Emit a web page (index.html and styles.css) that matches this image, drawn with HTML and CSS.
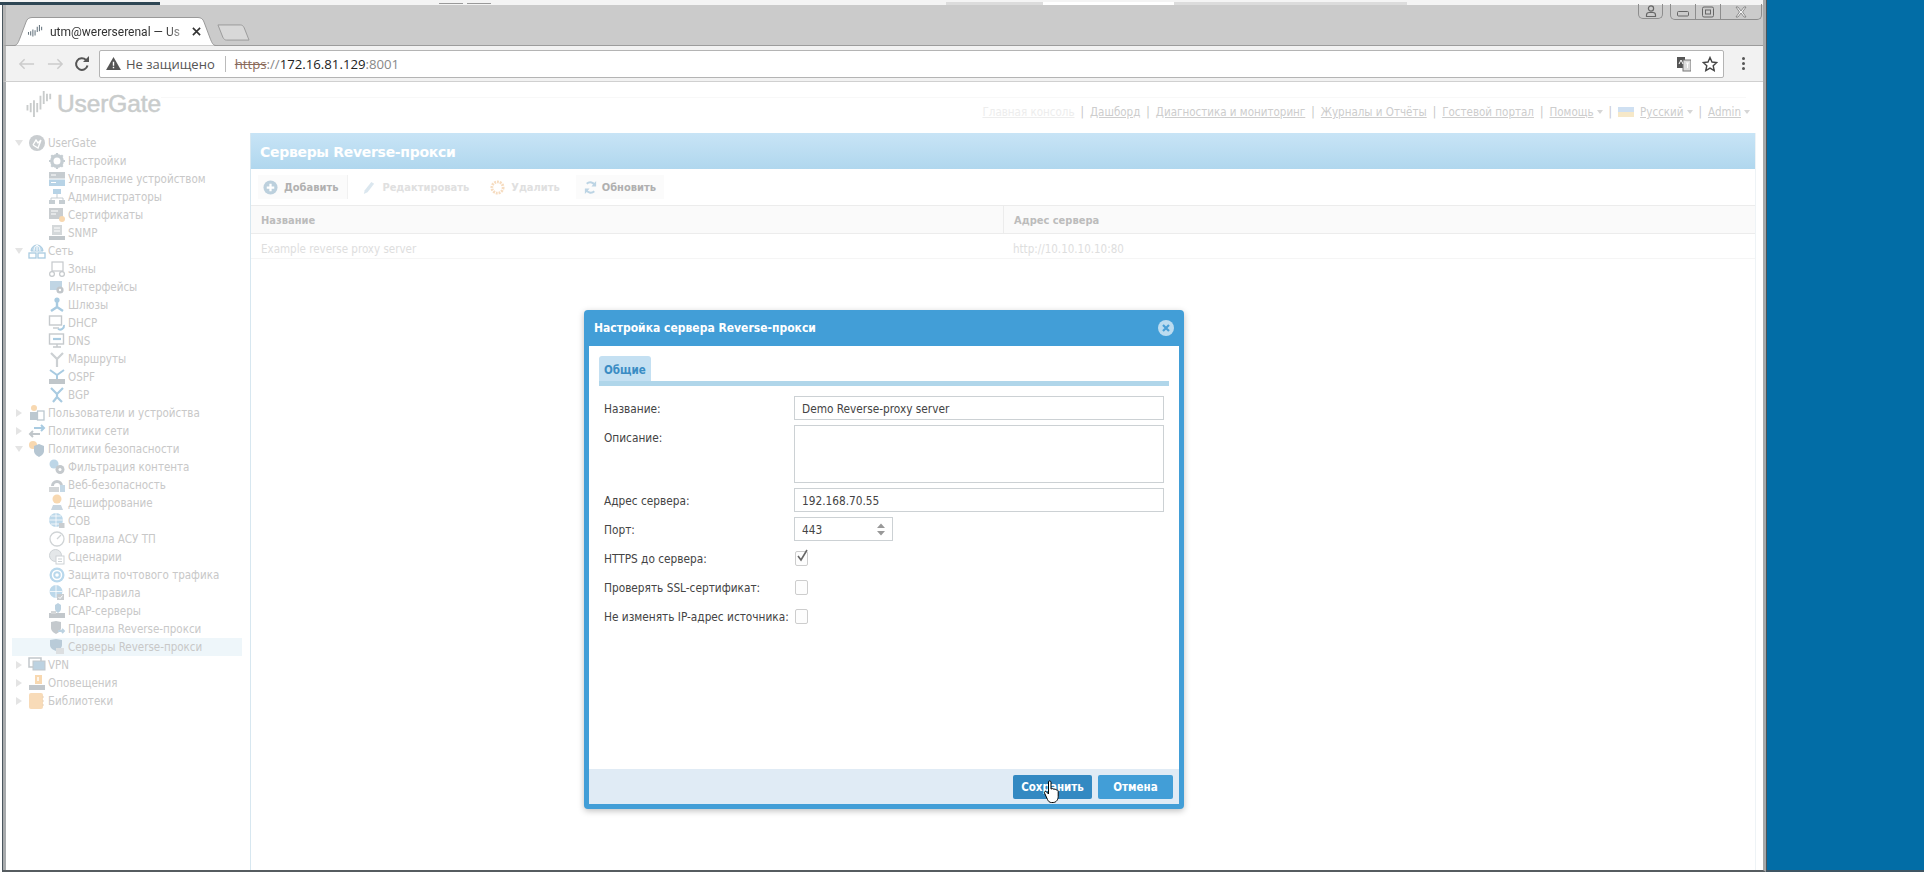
FILE: index.html
```html
<!DOCTYPE html>
<html lang="ru">
<head>
<meta charset="utf-8">
<title>UserGate</title>
<link rel="stylesheet" href="styles.css">
</head>
<body>
<svg class="defs" width="0" height="0" aria-hidden="true">
<defs>
<symbol id="i-ug" viewBox="0 0 18 18"><circle cx="9" cy="9" r="8" fill="#c9cdd0"/><path d="M5 11l3-5 2 3 3-3M5 11l5 3 3-8" fill="none" stroke="#fff" stroke-width="1.4"/></symbol>
<symbol id="i-gear" viewBox="0 0 18 18"><circle cx="9" cy="9" r="5.2" fill="none" stroke="#c5cdd2" stroke-width="3.4"/><path d="M9 1v3M9 14v3M1 9h3M14 9h3M3.3 3.3l2 2M12.7 12.7l2 2M14.7 3.3l-2 2M5.3 12.7l-2 2" stroke="#c5cdd2" stroke-width="2.2"/></symbol>
<symbol id="i-server" viewBox="0 0 18 18"><rect x="1" y="2" width="16" height="6.5" fill="#c6ccd0"/><rect x="1" y="9.5" width="16" height="6.5" fill="#b7d3e6"/><path d="M3 5h5M3 12.5h5" stroke="#fff"/></symbol>
<symbol id="i-admins" viewBox="0 0 18 18"><rect x="5" y="1" width="8" height="5" fill="#b7d3e6"/><path d="M9 6v4M3 13v-3h12v3" fill="none" stroke="#c5cdd2"/><rect x="1" y="12" width="6" height="4" fill="#c5cdd2"/><rect x="11" y="12" width="6" height="4" fill="#c5cdd2"/></symbol>
<symbol id="i-cert" viewBox="0 0 18 18"><rect x="1" y="2" width="14" height="11" fill="#c9cdd0"/><path d="M3 5h7M3 8h5" stroke="#fff"/><circle cx="14" cy="13" r="3" fill="#f8d8b0"/></symbol>
<symbol id="i-snmp" viewBox="0 0 18 18"><rect x="4" y="1" width="10" height="10" fill="#d4d8da"/><path d="M6 4h6M6 7h6" stroke="#fff"/><rect x="1" y="12" width="16" height="4" fill="#c0c6ca"/></symbol>
<symbol id="i-net" viewBox="0 0 18 18"><path d="M3 9a6 6 0 0 1 12 0z" fill="#bcd8ea" stroke="#a9cbe1"/><path d="M9 3v6M6 9c0-3 1-5 3-6M12 9c0-3-1-5-3-6" fill="none" stroke="#fff"/><rect x="1" y="11" width="7" height="5" fill="none" stroke="#a9cbe1" stroke-width="1.3"/><rect x="10" y="11" width="7" height="5" fill="none" stroke="#a9cbe1" stroke-width="1.3"/></symbol>
<symbol id="i-zone" viewBox="0 0 18 18"><rect x="4" y="2" width="11" height="9" fill="none" stroke="#c5c9cc" stroke-width="1.2"/><circle cx="4" cy="14" r="2.4" fill="none" stroke="#c5c9cc" stroke-width="1.2"/><circle cx="14" cy="14" r="2.4" fill="none" stroke="#c5c9cc" stroke-width="1.2"/></symbol>
<symbol id="i-iface" viewBox="0 0 18 18"><rect x="2" y="3" width="12" height="9" fill="#c0d5e4"/><circle cx="12" cy="12" r="3.6" fill="#c1c6ca"/><circle cx="12" cy="12" r="1.2" fill="#fff"/></symbol>
<symbol id="i-gate" viewBox="0 0 18 18"><circle cx="9" cy="4" r="2.6" fill="#a9cbe1"/><path d="M9 6v5L3 15M9 11l6 4" fill="none" stroke="#a9cbe1" stroke-width="2.4"/></symbol>
<symbol id="i-dhcp" viewBox="0 0 18 18"><rect x="1.5" y="2" width="12" height="9" fill="none" stroke="#c5c9cc" stroke-width="1.4"/><path d="M5 14h6" stroke="#c5c9cc" stroke-width="1.4"/><path d="M10 15a4 4 0 0 0 6-4" fill="none" stroke="#a9cbe1" stroke-width="2"/></symbol>
<symbol id="i-dns" viewBox="0 0 18 18"><rect x="1.5" y="2" width="14" height="10" fill="none" stroke="#c5c9cc" stroke-width="1.4"/><path d="M5 15h8M9 12v3" stroke="#c5c9cc" stroke-width="1.4"/><path d="M5 7h8" stroke="#a9cbe1" stroke-width="2.2"/></symbol>
<symbol id="i-route" viewBox="0 0 18 18"><path d="M9 17V9L3 3M9 9l6-6" fill="none" stroke="#ccd0d3" stroke-width="2.2"/></symbol>
<symbol id="i-ospf" viewBox="0 0 18 18"><path d="M2 2l7 5 7-5M9 7v4" fill="none" stroke="#a9cbe1" stroke-width="2"/><rect x="1" y="11" width="16" height="5" fill="#c0c6ca"/></symbol>
<symbol id="i-bgp" viewBox="0 0 18 18"><path d="M3 2l6 6 6-6M9 8v3l-4 5M9 11l5 5" fill="none" stroke="#a9cbe1" stroke-width="2.2"/></symbol>
<symbol id="i-users" viewBox="0 0 18 18"><circle cx="6" cy="4" r="3" fill="#f8d8b0"/><rect x="2" y="8" width="8" height="8" fill="#bcc8d0"/><rect x="9.5" y="7" width="6.5" height="9" fill="none" stroke="#bcc8d0" stroke-width="1.3"/></symbol>
<symbol id="i-pol" viewBox="0 0 18 18"><path d="M6 6h10M13 3l3 3-3 3" fill="none" stroke="#a9cbe1" stroke-width="2"/><path d="M12 12H2M5 9l-3 3 3 3" fill="none" stroke="#c0c6ca" stroke-width="2"/></symbol>
<symbol id="i-shield" viewBox="0 0 18 18"><circle cx="5" cy="5" r="4" fill="#f8d8b0"/><path d="M6 6l5-2 5 2v5c0 3-3 5-5 6-2-1-5-3-5-6z" fill="#b6c6d2"/></symbol>
<symbol id="i-filter" viewBox="0 0 18 18"><circle cx="6" cy="6" r="4.5" fill="#bdd6e7"/><circle cx="12" cy="11.500" r="4.500" fill="#c4c9cd"/><circle cx="12" cy="11.500" r="1.500" fill="#fff"/></symbol>
<symbol id="i-web" viewBox="0 0 18 18"><path d="M3 10a6 6 0 0 1 12 0h-3a3 3 0 0 0-6 0z" fill="#c4c9cd"/><rect x="1" y="11" width="10" height="5" fill="#d3d6d8"/><rect x="12" y="9" width="5" height="7" fill="#c4d8e6"/></symbol>
<symbol id="i-dec" viewBox="0 0 18 18"><circle cx="9" cy="5" r="4.500" fill="#f8d8b0"/><path d="M3 16l2-5h8l2 5z" fill="#c9d6e0"/></symbol>
<symbol id="i-ids" viewBox="0 0 18 18"><circle cx="8" cy="8" r="7" fill="#bcd8ea"/><path d="M1 8h14M8 1v14M3 4h10M3 12h10" stroke="#fff" stroke-width=".8"/><rect x="11" y="11" width="5.500" height="5" fill="#c9cdd0"/></symbol>
<symbol id="i-scada" viewBox="0 0 18 18"><circle cx="9" cy="9" r="7" fill="none" stroke="#d0d4d6" stroke-width="1.300"/><path d="M9 9l4-4" stroke="#d0d4d6" stroke-width="1.300"/></symbol>
<symbol id="i-scen" viewBox="0 0 18 18"><circle cx="7.500" cy="7.500" r="6" fill="#e4e7e9" stroke="#cdd2d5"/><rect x="8" y="8" width="8" height="8" fill="#fff" stroke="#cdd2d5"/><path d="M10 11h4M10 13.500h4" stroke="#cdd2d5"/></symbol>
<symbol id="i-mail" viewBox="0 0 18 18"><circle cx="9" cy="9" r="7.500" fill="#b9d8ec"/><circle cx="9" cy="9" r="4.500" fill="none" stroke="#fff" stroke-width="1.500"/><circle cx="9" cy="9" r="1.800" fill="#fff"/></symbol>
<symbol id="i-irule" viewBox="0 0 18 18"><circle cx="8" cy="7.500" r="6.500" fill="#bcd8ea"/><path d="M1.500 7.500h13M8 1v13" stroke="#fff" stroke-width=".8"/><rect x="9" y="10" width="7" height="6" fill="#c9cdd0"/><path d="M10.500 13l1.500 1.500 2.500-3" stroke="#fff" fill="none"/></symbol>
<symbol id="i-isrv" viewBox="0 0 18 18"><path d="M7 3l3-2 3 2v4c0 2-2 3-3 4-1-1-3-2-3-4z" fill="#bcd2e1"/><rect x="1" y="11" width="16" height="5" fill="#c2c7cb"/><rect x="3" y="9" width="5" height="3" fill="#d3d6d8"/></symbol>
<symbol id="i-rrule" viewBox="0 0 18 18"><path d="M3 2l5-1 5 1v6c0 3-3 5-5 6-2-1-5-3-5-6z" fill="#c4c9cd"/><path d="M10 11h6M14 9l2 2-2 2" fill="none" stroke="#bcd2e1" stroke-width="1.800"/></symbol>
<symbol id="i-rsrv" viewBox="0 0 18 18"><path d="M2 2l6-1 6 1v5c0 3-3 5-6 6-3-1-6-3-6-6z" fill="#b9cbd8"/><rect x="8" y="10" width="8" height="6" fill="#dcdfe1"/></symbol>
<symbol id="i-vpn" viewBox="0 0 18 18"><rect x="1" y="2" width="12" height="9" fill="none" stroke="#c2c7cb" stroke-width="1.500"/><rect x="5" y="5" width="12" height="9" fill="#bcd2e1" stroke="#c2c7cb"/></symbol>
<symbol id="i-alert" viewBox="0 0 18 18"><rect x="7" y="1" width="7" height="9" fill="#f8d8b0"/><rect x="1" y="11" width="16" height="5" fill="#c2c7cb"/><path d="M10 3v4" stroke="#fff" stroke-width="1.500"/></symbol>
<symbol id="i-lib" viewBox="0 0 18 18"><rect x="1" y="1" width="14" height="16" rx="2" fill="#f8dbb8"/><path d="M15 4v2M15 8v2M15 12v2" stroke="#e6d2bb"/></symbol>
</defs>
</svg>

<div class="screen">
  <div class="window">
    <div class="topstrip">
      <span class="strip-dark"></span>
      <span class="strip-tick t1"></span>
      <span class="strip-tick t2"></span>
      <span class="strip-seg s1"></span>
      <span class="strip-white"></span>
      <span class="strip-seg s2"></span>
    </div>
    <div class="tabstrip">
      <div class="tab">
        <svg class="tab-shape" viewBox="0 0 206 29" preserveAspectRatio="none"><path d="M0 28.500H2C5 28.500 6 26 8 21L14 5C15 2 17 .5 20 .5H186C189 .5 191 2 192 5L198 21C200 26 201 28.500 204 28.500H206" fill="#fff" stroke="#9a9a9a"/></svg>
        <svg class="tab-logo" viewBox="0 0 18 16"><path d="M1 8v3M3.500 7v5M6 5v8M8.500 6v6M11 2v6M13.500 0v7M16 2v4" stroke="#66757f" stroke-width="1.200"/></svg>
        <span class="tab-title">utm@wererserenal — Us</span>
        <svg class="tab-close" viewBox="0 0 10 10"><path d="M1 1l8 8M9 1l-8 8" stroke="#333" stroke-width="1.800"/></svg>
      </div>
      <svg class="newtab" viewBox="0 0 34 18" preserveAspectRatio="none"><path d="M1 1H24C26 1 27 2 28 4L33 17H10C8 17 7 16 6 14z" fill="#d8d8d8" stroke="#9a9a9a"/></svg>
      <div class="wincontrols">
        <div class="winbtn user"><svg viewBox="0 0 12 12" width="12" height="12"><circle cx="6" cy="3.500" r="2.600" fill="none" stroke="#666" stroke-width="1.200"/><path d="M1.500 11.500v-1.500c0-1.500 1-2.500 2.500-2.500h4c1.500 0 2.500 1 2.500 2.500v1.500z" fill="none" stroke="#666" stroke-width="1.200"/></svg></div>
        <div class="wingroup">
          <div class="winbtn"><svg class="ic-min" viewBox="0 0 12 6" width="12" height="6"><rect x=".5" y=".5" width="11" height="4.500" rx="1" fill="none" stroke="#666"/></svg></div>
          <div class="winbtn"><svg viewBox="0 0 12 12" width="12" height="12"><rect x=".5" y="1" width="11" height="10" rx="1.500" fill="none" stroke="#666"/><rect x="3.500" y="4" width="5" height="4" fill="none" stroke="#666"/></svg></div>
          <div class="winbtn wide"><svg viewBox="0 0 14 12" width="14" height="12"><path d="M2 1h2l3 4 3-4h2L8.500 6 12 11h-2L7 7l-3 4H2l3.500-5z" fill="#f4f4f4" stroke="#777" stroke-width=".8"/></svg></div>
        </div>
      </div>
    </div>
    <div class="toolbar">
      <svg class="nav-ic" viewBox="0 0 18 14"><path d="M17 7H2M7 2L2 7l5 5" fill="none" stroke="#ccc" stroke-width="1.600"/></svg>
      <svg class="nav-ic" viewBox="0 0 18 14"><path d="M1 7h15M11 2l5 5-5 5" fill="none" stroke="#ccc" stroke-width="1.600"/></svg>
      <svg class="nav-reload" viewBox="0 0 16 16"><path d="M13.500 9.500A5.800 5.800 0 1 1 12 4" fill="none" stroke="#555" stroke-width="2"/><path d="M9 6h6V0z" fill="#555"/></svg>
      <div class="omnibox">
        <svg class="warn" viewBox="0 0 16 14"><path d="M8 0l8 14H0z" fill="#555"/><path d="M8 5v4.500M8 10.500v1.500" stroke="#fff" stroke-width="1.500"/></svg>
        <span class="insecure">Не защищено</span>
        <span class="omni-sep"></span>
        <span class="url"><s class="url-s">https</s><span class="url-g">://</span>172.16.81.129<span class="url-g">:8001</span></span>
        <span class="omni-right">
          <svg class="translate" viewBox="0 0 14 16"><rect x="0" y="1" width="8" height="11" fill="#555"/><rect x="6" y="4" width="8" height="11" fill="#ddd" stroke="#777"/><path d="M2 8l2-4 2 4M9 7h3M10.500 7v5" stroke="#fff" fill="none"/></svg>
          <svg class="star" viewBox="0 0 16 16"><path d="M8 1.500l2 4.500 4.800.500-3.600 3.200 1 4.800L8 12.100 3.800 14.500l1-4.800L1.200 6.500 6 6z" fill="none" stroke="#444" stroke-width="1.400"/></svg>
        </span>
      </div>
      <div class="kebab"><i></i><i></i><i></i></div>
    </div>
    <div class="page">
      <header class="pagehead">
        <div class="logo">
          <svg class="logo-mark" viewBox="0 0 30 28"><path d="M1.500 15v6M5 13v10M8.500 10v18M12 13v10M15.500 5v15M19 0v14M22.500 3v8M26 3v6" stroke="#c9cccc" stroke-width="2" fill="none"/></svg>
          <span class="logo-text">UserGate</span>
        </div>
        <nav class="topnav">
          <a class="nl nl-faint">Главная консоль</a><span class="bar">|</span>
          <a class="nl">Дашборд</a><span class="bar">|</span>
          <a class="nl">Диагностика и мониторинг</a><span class="bar">|</span>
          <a class="nl">Журналы и Отчёты</a><span class="bar">|</span>
          <a class="nl">Гостевой портал</a><span class="bar">|</span>
          <a class="nl">Помощь</a><span class="caret"></span><span class="bar">|</span>
          <span class="flag"></span><a class="nl">Русский</a><span class="caret"></span><span class="bar">|</span>
          <a class="nl">Admin</a><span class="caret"></span>
        </nav>
      </header>
      <div class="workspace">
        <aside class="tree">
          <div class="row"><span class="arrow open"></span><svg class="ti"><use href="#i-ug"/></svg><span>UserGate</span></div>
          <div class="row child"><svg class="ti"><use href="#i-gear"/></svg><span>Настройки</span></div>
          <div class="row child"><svg class="ti"><use href="#i-server"/></svg><span>Управление устройством</span></div>
          <div class="row child"><svg class="ti"><use href="#i-admins"/></svg><span>Администраторы</span></div>
          <div class="row child"><svg class="ti"><use href="#i-cert"/></svg><span>Сертификаты</span></div>
          <div class="row child"><svg class="ti"><use href="#i-snmp"/></svg><span>SNMP</span></div>
          <div class="row"><span class="arrow open"></span><svg class="ti"><use href="#i-net"/></svg><span>Сеть</span></div>
          <div class="row child"><svg class="ti"><use href="#i-zone"/></svg><span>Зоны</span></div>
          <div class="row child"><svg class="ti"><use href="#i-iface"/></svg><span>Интерфейсы</span></div>
          <div class="row child"><svg class="ti"><use href="#i-gate"/></svg><span>Шлюзы</span></div>
          <div class="row child"><svg class="ti"><use href="#i-dhcp"/></svg><span>DHCP</span></div>
          <div class="row child"><svg class="ti"><use href="#i-dns"/></svg><span>DNS</span></div>
          <div class="row child"><svg class="ti"><use href="#i-route"/></svg><span>Маршруты</span></div>
          <div class="row child"><svg class="ti"><use href="#i-ospf"/></svg><span>OSPF</span></div>
          <div class="row child"><svg class="ti"><use href="#i-bgp"/></svg><span>BGP</span></div>
          <div class="row"><span class="arrow"></span><svg class="ti"><use href="#i-users"/></svg><span>Пользователи и устройства</span></div>
          <div class="row"><span class="arrow"></span><svg class="ti"><use href="#i-pol"/></svg><span>Политики сети</span></div>
          <div class="row"><span class="arrow open"></span><svg class="ti"><use href="#i-shield"/></svg><span>Политики безопасности</span></div>
          <div class="row child"><svg class="ti"><use href="#i-filter"/></svg><span>Фильтрация контента</span></div>
          <div class="row child"><svg class="ti"><use href="#i-web"/></svg><span>Веб-безопасность</span></div>
          <div class="row child"><svg class="ti"><use href="#i-dec"/></svg><span>Дешифрование</span></div>
          <div class="row child"><svg class="ti"><use href="#i-ids"/></svg><span>СОВ</span></div>
          <div class="row child"><svg class="ti"><use href="#i-scada"/></svg><span>Правила АСУ ТП</span></div>
          <div class="row child"><svg class="ti"><use href="#i-scen"/></svg><span>Сценарии</span></div>
          <div class="row child"><svg class="ti"><use href="#i-mail"/></svg><span>Защита почтового трафика</span></div>
          <div class="row child"><svg class="ti"><use href="#i-irule"/></svg><span>ICAP-правила</span></div>
          <div class="row child"><svg class="ti"><use href="#i-isrv"/></svg><span>ICAP-серверы</span></div>
          <div class="row child"><svg class="ti"><use href="#i-rrule"/></svg><span>Правила Reverse-прокси</span></div>
          <div class="row child selected"><svg class="ti"><use href="#i-rsrv"/></svg><span>Серверы Reverse-прокси</span></div>
          <div class="row"><span class="arrow"></span><svg class="ti"><use href="#i-vpn"/></svg><span>VPN</span></div>
          <div class="row"><span class="arrow"></span><svg class="ti"><use href="#i-alert"/></svg><span>Оповещения</span></div>
          <div class="row"><span class="arrow"></span><svg class="ti"><use href="#i-lib"/></svg><span>Библиотеки</span></div>
        </aside>
        <main class="main">
          <h1 class="panel-title">Серверы Reverse-прокси</h1>
          <div class="actions">
            <button class="act act-add"><svg class="act-ic" viewBox="0 0 16 16"><circle cx="8" cy="8" r="7.500" fill="#bcd0dd"/><path d="M8 4v8M4 8h8" stroke="#fff" stroke-width="2.400"/></svg>Добавить</button>
            <button class="act off act-edit"><svg class="act-ic" viewBox="0 0 16 16"><path d="M3 15l1-4 7-9 3 2-7 9z" fill="#dbe7ef"/></svg>Редактировать</button>
            <button class="act off act-del"><svg class="act-ic" viewBox="0 0 16 16"><circle cx="8" cy="8" r="6" fill="none" stroke="#f6dcc0" stroke-width="3" stroke-dasharray="2 1"/></svg>Удалить</button>
            <button class="act act-ref"><svg class="act-ic" viewBox="0 0 16 16"><path d="M13 6a5.500 5.500 0 0 0-9-2M3 10a5.500 5.500 0 0 0 9 2" fill="none" stroke="#bcd4e4" stroke-width="2.200"/><path d="M14 1v6H9zM2 15V9h5z" fill="#bcd4e4"/></svg>Обновить</button>
          </div>
          <div class="grid">
            <div class="cell head">Название</div>
            <div class="cell head">Адрес сервера</div>
            <div class="cell body">Example reverse proxy server</div>
            <div class="cell body">http://10.10.10.10:80</div>
          </div>
        </main>
      </div>
    </div>
    <section class="modal">
      <div class="modal-head">
        <span>Настройка сервера Reverse-прокси</span>
        <svg class="modal-x" viewBox="0 0 16 16"><circle cx="8" cy="8" r="8" fill="#bcdcf0"/><path d="M5 5l6 6M11 5l-6 6" stroke="#4a9fd6" stroke-width="2.200"/></svg>
      </div>
      <div class="modal-body">
        <div class="tabs"><span class="mtab">Общие</span></div>
        <form class="form">
          <label class="lbl">Название:</label><div class="input">Demo Reverse-proxy server</div>
          <label class="lbl">Описание:</label><div class="input area"></div>
          <label class="lbl">Адрес сервера:</label><div class="input">192.168.70.55</div>
          <label class="lbl">Порт:</label>
          <div class="input port">443
            <svg class="spin" viewBox="0 0 10 12"><path d="M5 0l4 4.500H1zM5 12L1 7.500h8z" fill="#999"/></svg>
          </div>
          <label class="lbl">HTTPS до сервера:</label><div class="chk-cell"><span class="chk"><svg class="tick" viewBox="0 0 14 14"><path d="M3 7l3 4 6-10" fill="none" stroke="#666" stroke-width="1.600"/></svg></span></div>
          <label class="lbl">Проверять SSL-сертификат:</label><div class="chk-cell"><span class="chk"></span></div>
          <label class="lbl">Не изменять IP-адрес источника:</label><div class="chk-cell"><span class="chk"></span></div>
        </form>
        <div class="modal-foot">
          <button class="btn btn-dark">Сохранить</button>
          <button class="btn">Отмена</button>
        </div>
      </div>
      <svg class="cursor" viewBox="0 0 16 24"><path d="M5 1.500c1-1 2.500-.5 2.500 1V9l1-.3c1-.3 1.500 0 1.800.7l.7-.2c1-.2 1.500.2 1.700.8 1-.2 2 .2 2 1.500v5c0 3-2 6-5 6H8c-2 0-3-1-4-3L1 13c-.5-1 .5-2 1.500-1.500L5 14z" fill="#fff" stroke="#000" stroke-width="1"/></svg>
    </section>
  </div>
  <div class="desktop"></div>
</div>
</body>
</html>
```
FILE: styles.css
```css
* { box-sizing: border-box; }
html, body { margin: 0; height: 100%; overflow: hidden; }
body { font-family: "DejaVu Sans", "Liberation Sans", sans-serif; font-stretch: condensed; font-size: 11.5px; color: #444; background: #fff; }
.defs { position: absolute; }
.screen { display: flex; width: 1924px; height: 872px; padding-left: 2px; }
.window { position: relative; width: 1764px; display: flex; flex-direction: column; border-left: 1px solid #4a565e; border-right: 3px solid #a6a8a9; border-bottom: 2px solid #565c60; }
.desktop { flex: 1; background: #026da6; border-left: 1px solid #4a565e; border-bottom: 2px solid #3f5563; }

.topstrip { height: 5px; background: #f4f4f4; display: flex; align-items: flex-end; margin-left: -3px; }
.strip-dark { width: 160px; height: 3px; background: #2e4654; }
.strip-tick { width: 24px; height: 1px; background: #9a9a9a; margin-bottom: 1px; }
.t1 { margin-left: 279px; }
.t2 { margin-left: 4px; }
.strip-seg { height: 3px; background: #dcdcdc; }
.s1 { width: 97px; margin-left: 455px; }
.s2 { width: 233px; }
.strip-white { width: 131px; height: 3px; background: #fff; }

.tabstrip { height: 40px; background: #cbcbcb; display: flex; align-items: flex-end; padding-left: 6px; position: relative; border-left: 3px solid #b5b5b5; }
.tab { position: relative; width: 206px; height: 29px; margin-bottom: -1px; display: flex; align-items: center; padding-left: 15px; z-index: 1; }
.tab-shape { position: absolute; inset: 0; width: 100%; height: 100%; }
.tab-logo { position: relative; width: 17px; height: 14px; }
.tab-title { position: relative; flex: none; width: 135px; margin-left: 6px; white-space: nowrap; font: 12px Roboto, "Liberation Sans", sans-serif; color: #333; -webkit-mask-image: linear-gradient(90deg, #000 86%, rgba(0,0,0,.3)); mask-image: linear-gradient(90deg, #000 86%, rgba(0,0,0,.3)); }
.tab-close { position: relative; width: 9px; height: 9px; margin-left: 7px; }
.newtab { width: 33px; height: 17px; margin: 0 0 4px -1px; }
.wincontrols { position: absolute; top: -1px; right: 1px; display: flex; gap: 7px; }
.winbtn { height: 15px; width: 25px; display: flex; align-items: center; justify-content: center; border-right: 1px solid #8d8d8d; }
.winbtn.user { border: 1px solid #8d8d8d; border-top: 0; border-radius: 0 0 5px 5px; }
.wingroup { display: flex; border: 1px solid #8d8d8d; border-top: 0; border-radius: 0 0 5px 5px; }
.winbtn.wide { width: 40px; border-right: 0; }
.ic-min { margin-top: 5px; }

.toolbar { height: 37px; background: #f2f2f2; border-top: 1px solid #9c9c9c; border-bottom: 1px solid #d0d0d0; display: flex; align-items: center; padding-left: 12px; border-left: 3px solid #b5b5b5; }
.nav-ic { width: 17px; height: 14px; margin-right: 12px; }
.nav-reload { width: 16px; height: 16px; margin-left: -2px; }
.omnibox { width: 1625px; height: 28px; margin-left: 9px; background: #fff; border: 1px solid #b4b4b4; border-radius: 2px; display: flex; align-items: center; padding-left: 6px; font: 13px "Open Sans", "Liberation Sans", sans-serif; }
.warn { width: 15px; height: 13px; }
.insecure { margin-left: 5px; color: #555; }
.omni-sep { width: 1px; height: 16px; background: #bbb; margin: 0 9px 0 10px; }
.url { color: #222; font-size: 13.2px; }
.url-s { color: #8a6a5a; }
.url-g { color: #888; }
.omni-right { margin-left: auto; display: flex; align-items: center; gap: 11px; padding-right: 5px; }
.translate { width: 14px; height: 16px; }
.star { width: 16px; height: 16px; }
.kebab { display: flex; flex-direction: column; gap: 2px; margin-left: 18px; }
.kebab i { display: block; width: 3px; height: 3px; border-radius: 50%; background: #555; }

.page { flex: 1; background: #fff; display: flex; flex-direction: column; min-height: 0; border-left: 3px solid #a8abad; }
.pagehead { height: 51px; display: flex; align-items: flex-start; position: relative; }
.pagehead::after { content: ""; position: absolute; left: 50px; right: 17px; top: 15px; height: 1px; background: #f8f8f8; }
.logo { display: flex; align-items: center; margin: 8px 0 0 19px; position: relative; z-index: 1; background: #fff; }
.logo-mark { width: 30px; height: 26px; }
.logo-text { font: 400 24.5px "Liberation Sans", sans-serif; -webkit-text-stroke: .5px #c9cccc; color: #c9cccc; margin-left: 2px; letter-spacing: -.1px; }
.topnav { margin: 23px 13px 0 auto; display: flex; align-items: center; height: 14px; font-size: 11.5px; white-space: nowrap; position: relative; z-index: 1; }
.nl { text-decoration: underline; color: #cdcdcd; }
.nl-faint { color: #ededed; }
.bar { margin: 0 6px; color: #c4c4c4; }
.caret { width: 0; height: 0; border: 3.5px solid transparent; border-top: 4px solid #d6d6d6; border-bottom: 0; margin-left: 3px; }
.flag { width: 16px; height: 10px; margin-right: 6px; background: linear-gradient(#cfe0f2 50%, #f6e8c8 50%); }

.workspace { flex: 1; display: flex; min-height: 0; }
.tree { width: 244px; flex: none; color: #c8c8c8; padding: 1px 0 0 5px; }
.row { height: 18px; display: flex; align-items: center; white-space: nowrap; padding-left: 4px; }
.row.child { padding-left: 37px; }
.row.selected { background: #eef6fa; margin: 0 8px 0 1px; padding-left: 36px; }
.ti { width: 18px; height: 18px; flex: none; margin-right: 2px; }
.arrow { width: 0; height: 0; margin: 0 6px 0 1px; border-style: solid; border-color: transparent transparent transparent #e4e4e4; border-width: 4px 0 4px 6px; }
.arrow.open { border-width: 6px 4px 0; border-color: #e4e4e4 transparent transparent; margin: 0 5px 0 0; }

.main { flex: 1; border-left: 1px solid #d7e7f0; border-right: 1px solid #eef3f6; margin-right: 7px; min-width: 0; }
.panel-title { margin: 0; height: 36px; display: flex; align-items: center; padding: 2px 0 0 9px; background: linear-gradient(#c8e4f6, #b0d7ee); color: #fff; font-size: 14px; font-weight: 700; font-stretch: normal; letter-spacing: -.3px; }
.actions { height: 37px; display: flex; align-items: center; padding-left: 7px; border-bottom: 1px solid #ececec; }
.act { height: 24px; display: flex; align-items: center; border: 0; background: #fbfbfb; margin: 0; font: 700 11px "DejaVu Sans", sans-serif; font-stretch: condensed; color: #b0b0b0; }
.act.off { background: #fff; color: #e0e0e0; }
.act-ic { width: 15px; height: 15px; margin-right: 6px; }
.act-add { padding: 0 9px 0 5px; border-right: 1px solid #f1f1f1; }
.act-edit { padding: 0 11px 0 13px; }
.act-del { padding: 0 16px 0 10px; }
.act-ref { padding: 0 8px 0 7px; }
.act-ref .act-ic { margin-right: 4px; }
.grid { display: grid; grid-template-columns: 752px 1fr; grid-template-rows: 28px 25px; }
.cell { display: flex; align-items: center; padding-left: 10px; }
.cell.head { background: #fafafa; border-bottom: 1px solid #ececec; font-weight: 700; font-size: 11px; color: #bcbcbc; padding-top: 2px; }
.cell.body { border-bottom: 1px solid #f5f5f5; color: #dedede; padding-top: 6px; }
.cell:nth-child(2) { border-left: 1px solid #ececec; }

.modal { position: absolute; left: 581px; top: 310px; width: 600px; height: 499px; border-radius: 4px; background: #429ed7; padding: 0 5px 5px; box-shadow: 0 2px 6px rgba(0,0,0,.25); display: flex; flex-direction: column; }
.modal-head { height: 36px; flex: none; display: flex; align-items: center; justify-content: space-between; padding: 0 5px; color: #fff; font: 700 12px "DejaVu Sans", sans-serif; font-stretch: condensed; }
.modal-x { width: 16px; height: 16px; }
.modal-body { flex: 1; background: #fff; display: flex; flex-direction: column; min-height: 0; }
.tabs { margin: 10px 10px 0; height: 30px; display: flex; border-bottom: 5px solid #b0d6ea; }
.mtab { height: 25px; padding: 2px 5px 0; display: flex; align-items: center; background: #c4e0f2; color: #3a8cc4; font-weight: 700; border-radius: 3px 3px 0 0; }
.form { display: grid; grid-template-columns: 190px 370px; margin: 10px 0 0 15px; row-gap: 5px; align-items: center; align-content: start; flex: 1; font-size: 11.75px; color: #444; }
.lbl { align-self: start; height: 24px; line-height: 26px; }
.input { height: 24px; border: 1px solid #ccd1d4; padding: 2px 0 0 7px; display: flex; align-items: center; background: #fff; }
.input.area { height: 58px; }
.input.port { width: 99px; justify-content: space-between; padding-right: 6px; }
.spin { width: 10px; height: 13px; margin-top: -2px; }
.chk-cell { height: 24px; display: flex; align-items: center; padding-left: 1px; }
.chk { width: 13px; height: 15px; border: 1px solid #cdcdcd; border-radius: 2px; display: block; position: relative; background: #fdfdfd; }
.tick { position: absolute; left: -1px; top: -3px; width: 14px; height: 14px; }
.modal-foot { height: 35px; flex: none; background: #e0ebf5; display: flex; justify-content: flex-end; align-items: center; gap: 6px; padding-right: 6px; }
.btn { width: 75px; height: 24px; border: 0; border-radius: 2px; background: #429ed7; color: #fff; font: 700 11.5px "DejaVu Sans", sans-serif; font-stretch: condensed; padding: 0; }
.btn-dark { width: 79px; background: #3389c2; }
.cursor { position: absolute; left: 459px; top: 470px; width: 17px; height: 24px; }
```
